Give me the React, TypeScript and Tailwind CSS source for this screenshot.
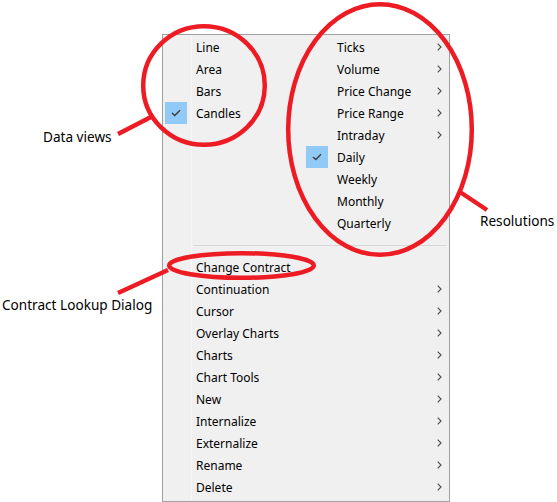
import React from "react";

type Item = { label: string; sub?: boolean; checked?: boolean };

const leftItems: Item[] = [
  { label: "Line" },
  { label: "Area" },
  { label: "Bars" },
  { label: "Candles", checked: true },
];

const rightItems: Item[] = [
  { label: "Ticks", sub: true },
  { label: "Volume", sub: true },
  { label: "Price Change", sub: true },
  { label: "Price Range", sub: true },
  { label: "Intraday", sub: true },
  { label: "Daily", checked: true },
  { label: "Weekly" },
  { label: "Monthly" },
  { label: "Quarterly" },
];

const bottomItems: Item[] = [
  { label: "Change Contract" },
  { label: "Continuation", sub: true },
  { label: "Cursor", sub: true },
  { label: "Overlay Charts", sub: true },
  { label: "Charts", sub: true },
  { label: "Chart Tools", sub: true },
  { label: "New", sub: true },
  { label: "Internalize", sub: true },
  { label: "Externalize", sub: true },
  { label: "Rename", sub: true },
  { label: "Delete", sub: true },
];

function Check() {
  return (
    <div className="w-[22px] h-[22px] bg-[#91c9f7] flex items-center justify-center">
      <svg width="10" height="8" viewBox="0 0 10 8">
        <polyline points="1,4 3.8,6.6 9,1.2" fill="none" stroke="#3c3c3c" strokeWidth="1.4" />
      </svg>
    </div>
  );
}

function Chevron() {
  return (
    <svg width="5" height="8" viewBox="0 0 5 8">
      <polyline points="0.7,0.6 4,4 0.7,7.4" fill="none" stroke="#4a4a4a" strokeWidth="1.1" />
    </svg>
  );
}

function Row({ item }: { item: Item }) {
  return (
    <div className="h-[22px] flex items-center">
      <div className="w-[33px] pl-[2px] flex items-center shrink-0">{item.checked ? <Check /> : null}</div>
      <span className="flex-1 text-black whitespace-nowrap pt-[2px]">{item.label}</span>
      <div className="w-[12px] flex items-center shrink-0">{item.sub ? <Chevron /> : null}</div>
    </div>
  );
}

export default function App() {
  return (
    <div
      className="relative w-[557px] h-[502px] bg-white overflow-hidden"
      style={{ fontFamily: '"Noto Sans", "Open Sans", sans-serif' }}
    >
      <div className="pl-[162px] pt-[34px]">
        <div className="relative w-[288px] h-[468px] border border-[#a0a0a0] bg-[#f0f0f0] pt-[1px] pb-[2px] text-[12px] leading-[16px]">
          <div className="absolute left-[28px] top-0 bottom-0 w-px bg-[#f7f7f7]" />
          <div className="relative flex">
            <div className="w-[141px] flex flex-col">
              {leftItems.map((it) => (
                <Row key={it.label} item={it} />
              ))}
            </div>
            <div className="flex-1 flex flex-col">
              {rightItems.map((it) => (
                <Row key={it.label} item={it} />
              ))}
            </div>
          </div>
          <div className="relative h-[22px] flex items-center pl-[30px] pr-[2px]">
            <div className="h-px w-full bg-[#d7d7d7]" />
          </div>
          <div className="relative flex flex-col">
            {bottomItems.map((it) => (
              <Row key={it.label} item={it} />
            ))}
          </div>
        </div>
      </div>

      <svg className="absolute left-0 top-0 pointer-events-none" width="557" height="502" viewBox="0 0 557 502">
        <g fill="none" stroke="#ed1c24" strokeWidth="4.5">
          <ellipse cx="204" cy="85.5" rx="60.8" ry="59.3" />
          <ellipse cx="380" cy="129.5" rx="91.8" ry="125.3" />
          <ellipse cx="241.5" cy="265.5" rx="72.3" ry="12.3" />
          <line x1="118" y1="134" x2="151" y2="117" />
          <line x1="118" y1="293" x2="168" y2="270" />
          <line x1="460" y1="192" x2="487" y2="210" />
        </g>
      </svg>

      <div className="absolute left-[43px] top-[127px] text-[13.6px] leading-[20px] text-black whitespace-nowrap">Data views</div>
      <div className="absolute left-[2px] top-[295px] text-[13.6px] leading-[20px] text-black whitespace-nowrap">Contract Lookup Dialog</div>
      <div className="absolute left-[480px] top-[211px] text-[13.6px] leading-[20px] text-black whitespace-nowrap">Resolutions</div>
    </div>
  );
}
